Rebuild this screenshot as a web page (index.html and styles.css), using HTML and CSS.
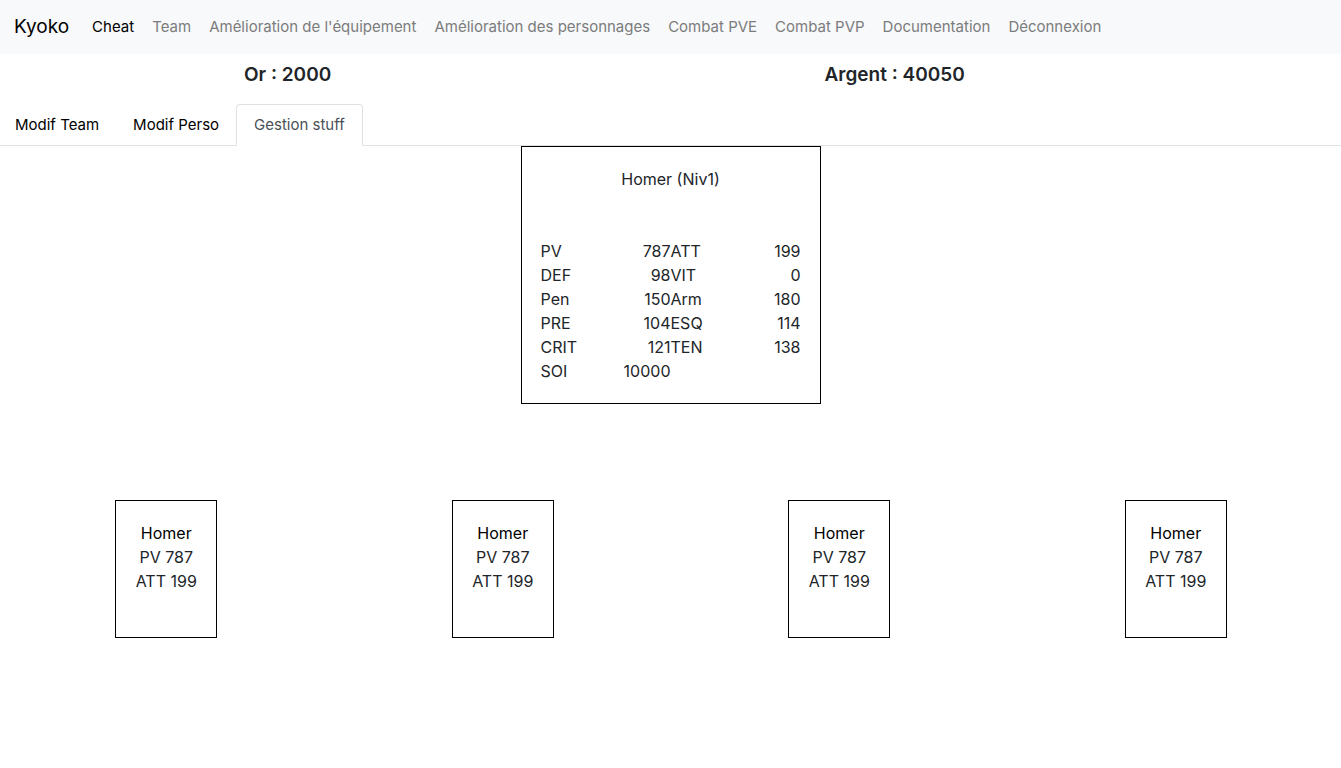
FILE: index.html
```html
<!DOCTYPE html>
<html lang="fr">
<head>
<meta charset="utf-8">
<title>Kyoko</title>
<link rel="stylesheet" href="styles.css">
</head>
<body>
<nav class="navbar">
  <a class="brand" href="#">Kyoko</a>
  <a class="nav-link active" href="#">Cheat</a>
  <a class="nav-link" href="#">Team</a>
  <a class="nav-link" href="#">Amélioration de l'équipement</a>
  <a class="nav-link" href="#">Amélioration des personnages</a>
  <a class="nav-link" href="#">Combat PVE</a>
  <a class="nav-link" href="#">Combat PVP</a>
  <a class="nav-link" href="#">Documentation</a>
  <a class="nav-link" href="#">Déconnexion</a>
</nav>
<div class="money">
  <h5 class="amount">Or : 2000</h5>
  <h5 class="amount">Argent : 40050</h5>
</div>
<nav class="tabs">
  <a class="tab" href="#">Modif Team</a>
  <a class="tab" href="#">Modif Perso</a>
  <a class="tab selected" href="#">Gestion stuff</a>
</nav>
<main>
  <section class="sheet">
    <p class="sheet-title">Homer (Niv1)</p>
    <table class="stats">
      <tr><td>PV</td><td class="num">787</td><td>ATT</td><td class="num">199</td></tr>
      <tr><td>DEF</td><td class="num">98</td><td>VIT</td><td class="num">0</td></tr>
      <tr><td>Pen</td><td class="num">150</td><td>Arm</td><td class="num">180</td></tr>
      <tr><td>PRE</td><td class="num">104</td><td>ESQ</td><td class="num">114</td></tr>
      <tr><td>CRIT</td><td class="num">121</td><td>TEN</td><td class="num">138</td></tr>
      <tr><td>SOI</td><td class="num">10000</td><td></td><td></td></tr>
    </table>
  </section>
  <div class="team">
    <div class="card"><a class="name" href="#">Homer</a><span>PV 787</span><span>ATT 199</span></div>
    <div class="card"><a class="name" href="#">Homer</a><span>PV 787</span><span>ATT 199</span></div>
    <div class="card"><a class="name" href="#">Homer</a><span>PV 787</span><span>ATT 199</span></div>
    <div class="card"><a class="name" href="#">Homer</a><span>PV 787</span><span>ATT 199</span></div>
  </div>
</main>
</body>
</html>
```
FILE: styles.css
```css
* { box-sizing: border-box; }
body {
  margin: 0;
  background: #fff;
  color: #212529;
  font-family: Inter, "Liberation Sans", sans-serif;
  font-size: 16px;
  line-height: 24px;
}
a { color: #000; text-decoration: none; }
.navbar, .tabs { font-size: 15px; }
.navbar {
  display: flex;
  align-items: center;
  min-height: 54px;
  padding: 0 14px;
  background: #f8f9fa;
}
.brand { margin-right: 14px; font-size: 19px; }
.nav-link { padding: 8px 9px; color: #7b7c7d; }
.nav-link.active { color: #000; }
.money {
  display: grid;
  grid-template-columns: 1fr 1fr;
  gap: 64px;
  padding: 9px 0 17px 244px;
}
.amount { margin: 0; font-size: 19px; font-weight: 600; line-height: 24px; }
.tabs { display: flex; border-bottom: 1px solid #dee2e6; }
.tab {
  margin-bottom: -1px;
  padding: 8px 16px;
  border: 1px solid transparent;
  border-radius: 4px 4px 0 0;
}
.tab:first-child { padding-left: 14px; }
.tab.selected { padding: 8px 17px; color: #495057; background: #fff; border-color: #dee2e6 #dee2e6 #fff; }
.sheet {
  width: 300px;
  margin: 0 auto 96px;
  padding: 20px 19px;
  border: 1px solid #000;
}
.sheet-title { margin: 0 0 48px; text-align: center; }
.stats { width: 100%; table-layout: fixed; border-collapse: collapse; }
.stats td { padding: 0; }
.stats td:nth-child(odd) { width: 25%; }
.num { text-align: right; }
.team {
  display: grid;
  grid-template-columns: repeat(4, 1fr);
  column-gap: 6px;
  justify-items: center;
  padding-left: 1px;
}
.card {
  display: flex;
  flex-direction: column;
  width: 102px;
  padding: 20px 0 44px;
  border: 1px solid #000;
  text-align: center;
}
```
